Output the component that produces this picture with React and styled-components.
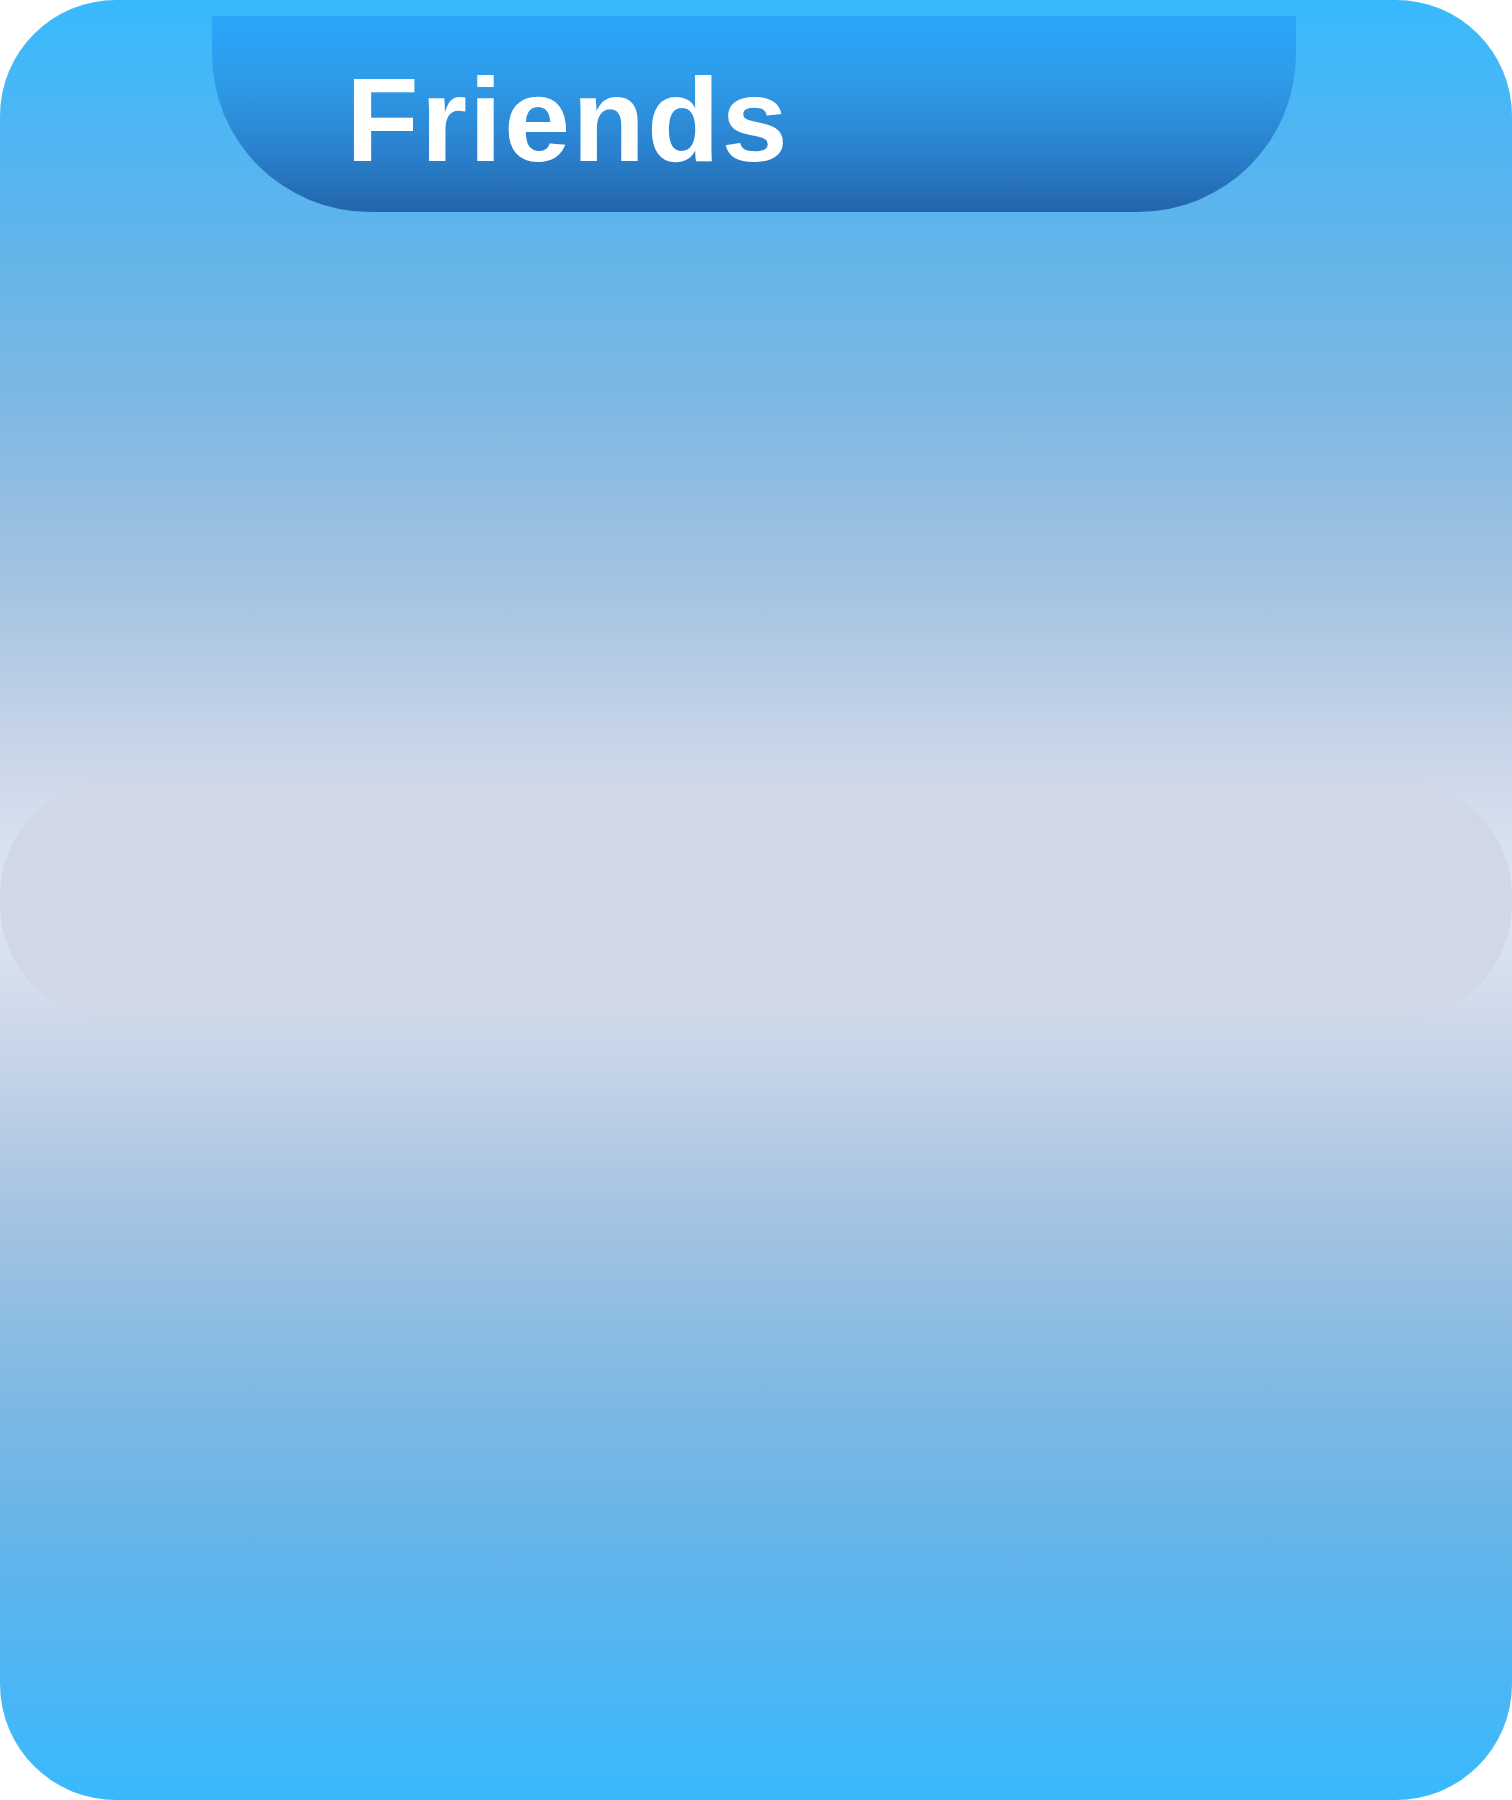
import React from "react";
import styled, { createGlobalStyle } from "styled-components";

const Global = createGlobalStyle`
  html, body { margin: 0; padding: 0; background: #ffffff; }
  body { font-family: "Liberation Sans", Arial, sans-serif; }
`;

const Card = styled.div`
  width: 1512px;
  height: 1800px;
  border-radius: 116px;
  overflow: hidden;
  background: linear-gradient(
    180deg,
    #38b9fe 0%,
    #5db4ec 12%,
    #7db8e3 22%,
    #a6c4e2 33%,
    #c6d4e8 41%,
    #d8e1ee 47%,
    #dce3ef 50%,
    #d8e1ee 53%,
    #c6d4e8 59%,
    #a6c4e2 67%,
    #7db8e3 78%,
    #5db4ec 88%,
    #38b9fe 100%
  );
  display: grid;
  grid-template-rows: 212px 568px 240px 1fr;
`;

const HeaderTab = styled.div`
  margin: 16px 216px 0 212px;
  border-radius: 0 0 158px 158px;
  background: linear-gradient(180deg, #2aa7fb 0%, #2e9ae8 35%, #2a80cc 70%, #2365ab 100%);
  display: flex;
  align-items: flex-start;
  padding-left: 134px;
`;

const Title = styled.h1`
  margin: 0;
  padding-top: 44px;
  font-family: "Liberation Sans", Arial, sans-serif;
  font-weight: 700;
  font-size: 119px;
  line-height: 1;
  letter-spacing: 2px;
  color: #ffffff;
`;

const Pill = styled.div`
  grid-row: 3;
  border-radius: 116px;
  background: #d0d7e6;
  opacity: 0.95;
`;

export default function App() {
  return (
    <>
      <Global />
      <Card>
        <HeaderTab>
          <Title>Friends</Title>
        </HeaderTab>
        <Pill />
      </Card>
    </>
  );
}
